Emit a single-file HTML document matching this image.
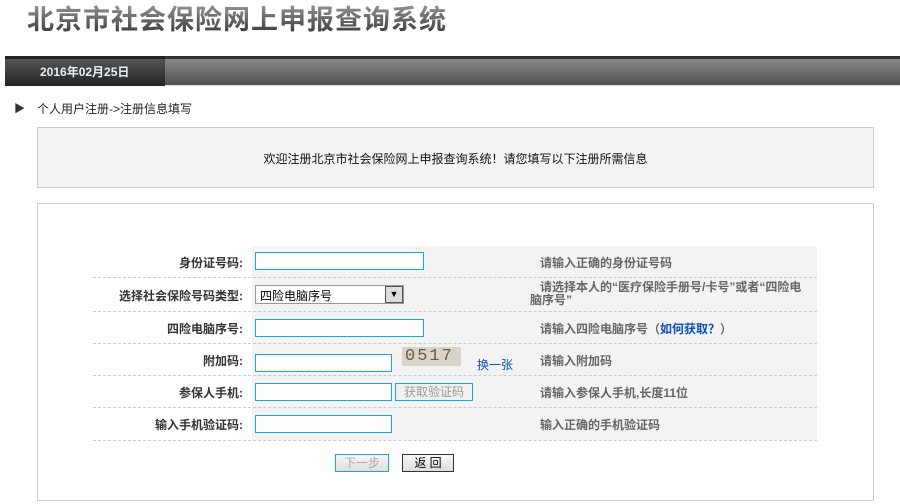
<!DOCTYPE html>
<html><head><meta charset="utf-8"><style>
*{margin:0;padding:0;box-sizing:border-box}
body{width:900px;height:504px;background:#fff;position:relative;overflow:hidden;font-family:"Liberation Sans","Noto Sans CJK SC",sans-serif;font-size:12px;color:#333}
.a{position:absolute}
.title{left:27px;top:2px;font-size:27px;font-weight:bold;letter-spacing:1px;background:linear-gradient(#9a9a9a,#3a3a3a);-webkit-background-clip:text;color:transparent;font-family:"Noto Sans CJK SC",sans-serif;line-height:32px}
.bar{left:5px;top:56px;width:895px;height:30px;background:linear-gradient(#888,#505050);border-top:3px solid #333;border-bottom:1px solid #ddd}
.barl{left:5px;top:56px;width:160px;height:30px;background:linear-gradient(#555,#222);border-top:3px solid #222}
.date{left:40px;top:63px;color:#e8eef8;font-weight:bold;font-size:12px}
.box1{left:37px;top:127px;width:837px;height:61px;background:#f3f3f3;border:1px solid #ccc}
.box2{left:37px;top:203px;width:837px;height:298px;background:#fff;border:1px solid #ccc}
.gray{left:252px;top:246px;width:565px;height:194px;background:#f3f3f3}
.dl{left:93px;width:724px;height:0;border-top:1px dashed #ccc}
.lab{width:150px;left:93px;text-align:right;font-weight:bold;color:#333;font-size:12px}
.hint{left:540px;color:#666;font-weight:bold;font-size:12px}
.in{left:255px;height:18px;border:1px solid #18a8e0;background:#fff}
</style></head><body>
<div class="a title">北京市社会保险网上申报查询系统</div>
<div class="a bar"></div><div class="a barl"></div>
<div class="a date">2016年02月25日</div>
<div class="a" style="left:14px;top:100px;font-size:11px">▶</div>
<div class="a" style="left:37px;top:100px;color:#222">个人用户注册-&gt;注册信息填写</div>
<div class="a box1"></div>
<div class="a" style="left:37px;width:837px;top:150px;text-align:center;color:#111">欢迎注册北京市社会保险网上申报查询系统！请您填写以下注册所需信息</div>
<div class="a box2"></div>
<div class="a gray"></div>
<div class="a dl" style="top:277px"></div>
<div class="a dl" style="top:311px"></div>
<div class="a dl" style="top:343px"></div>
<div class="a dl" style="top:375px"></div>
<div class="a dl" style="top:407px"></div>
<div class="a dl" style="top:440px"></div>

<div class="a lab" style="top:254px">身份证号码:</div>
<div class="a in" style="top:252px;width:169px"></div>
<div class="a hint" style="top:254px">请输入正确的身份证号码</div>

<div class="a lab" style="top:287px">选择社会保险号码类型:</div>
<div class="a" style="left:255px;top:285px;width:149px;height:19px;border:1px solid #999;background:#fff;font-size:12px;padding:1px 4px;color:#000">四险电脑序号</div>
<div class="a" style="left:385px;top:286px;width:18px;height:17px;background:#ddd;border:1px solid #555;font-size:9px;text-align:center;line-height:15px;color:#000">▼</div>
<div class="a hint" style="top:281px;width:270px;line-height:13px;text-indent:0">请选择本人的“医疗保险手册号/卡号”或者“四险电<br><span style="margin-left:-10px">脑序号”</span></div>

<div class="a lab" style="top:320px">四险电脑序号:</div>
<div class="a in" style="top:319px;width:169px"></div>
<div class="a hint" style="top:320px">请输入四险电脑序号（<span style="color:#0a4fbf">如何获取？</span>）</div>

<div class="a lab" style="top:352px">附加码:</div>
<div class="a in" style="top:354px;width:137px"></div>
<div class="a" style="left:402px;top:347px;width:59px;height:19px;background:#d8d4c8;font-family:'Liberation Mono',monospace;font-size:17px;letter-spacing:2px;color:#6a5a50;padding-left:3px;line-height:19px">0517</div>
<div class="a" style="left:477px;top:356px;color:#0a4fbf">换一张</div>
<div class="a hint" style="top:352px">请输入附加码</div>

<div class="a lab" style="top:384px">参保人手机:</div>
<div class="a in" style="top:383px;width:137px"></div>
<div class="a" style="left:395px;top:383px;width:78px;height:18px;border:1px solid #18a8e0;background:#f0f0f0;color:#999;text-align:center;line-height:16px">获取验证码</div>
<div class="a hint" style="top:384px">请输入参保人手机,长度11位</div>

<div class="a lab" style="top:416px">输入手机验证码:</div>
<div class="a in" style="top:415px;width:137px"></div>
<div class="a hint" style="top:416px">输入正确的手机验证码</div>

<div class="a" style="left:335px;top:454px;width:54px;height:18px;border:1px solid #18a8e0;background:linear-gradient(#f8f8f8,#ddd);color:#aaa;text-align:center;line-height:16px">下一步</div>
<div class="a" style="left:402px;top:454px;width:52px;height:18px;border:1px solid #333;background:linear-gradient(#f8f8f8,#ddd);color:#000;text-align:center;line-height:16px">返 回</div>
</body></html>
